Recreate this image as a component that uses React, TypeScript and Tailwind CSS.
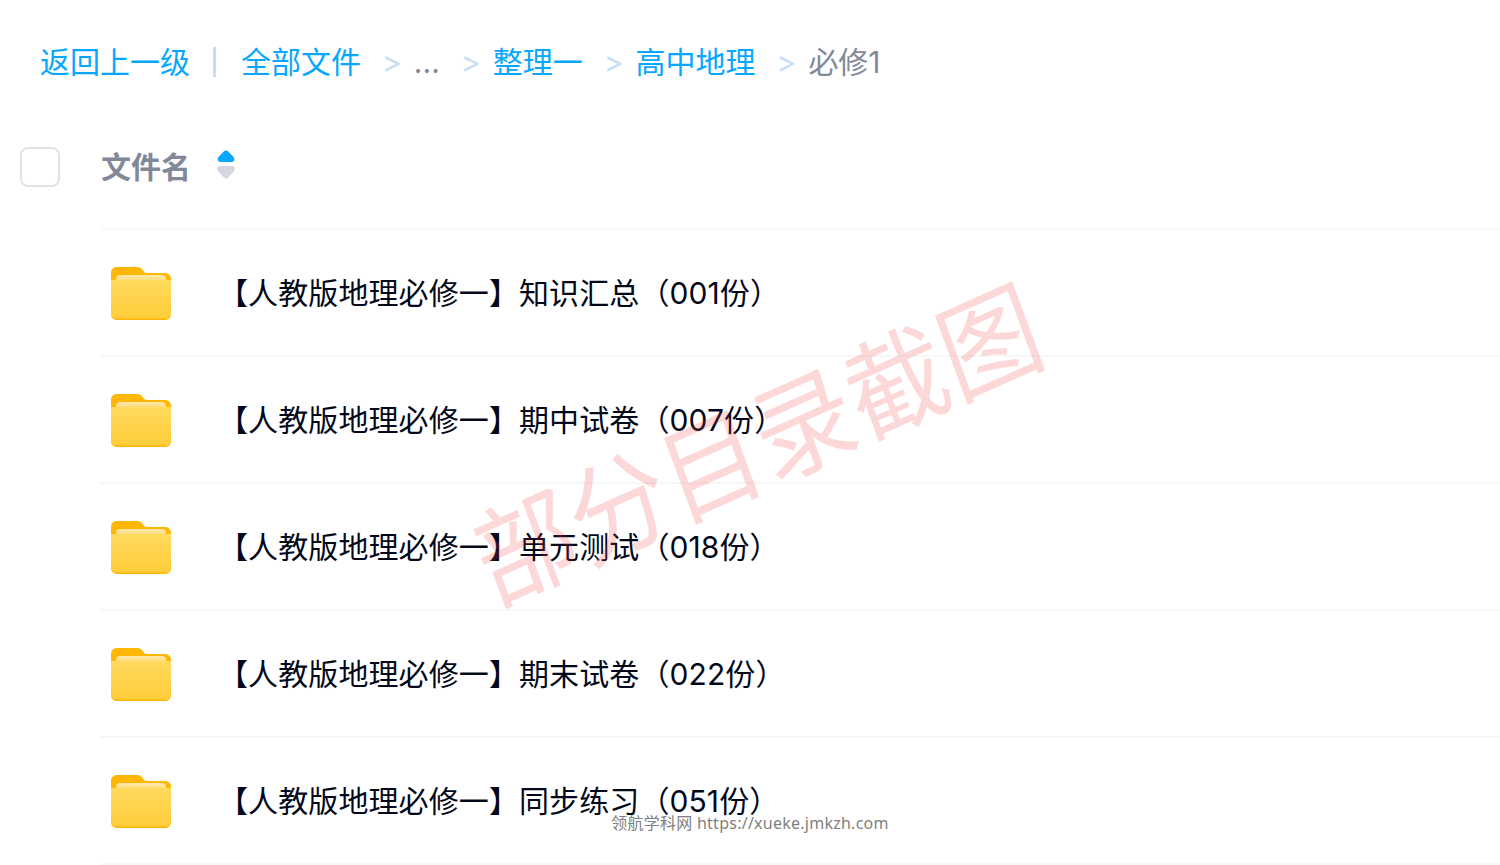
const ROWS = [
  "【人教版地理必修一】知识汇总（001份）",
  "【人教版地理必修一】期中试卷（007份）",
  "【人教版地理必修一】单元测试（018份）",
  "【人教版地理必修一】期末试卷（022份）",
  "【人教版地理必修一】同步练习（051份）",
];

function FolderIcon() {
  return (
    <svg width="60" height="53" viewBox="0 0 60 53" className="mt-[2px] shrink-0">
      <defs>
        <linearGradient id="folderFront" x1="0" y1="0" x2="0" y2="1">
          <stop offset="0" stopColor="#ffda5e" />
          <stop offset="1" stopColor="#ffcd3a" />
        </linearGradient>
        <linearGradient id="folderPaper" x1="0" y1="0" x2="0" y2="1">
          <stop offset="0" stopColor="#ffe7a6" />
          <stop offset="1" stopColor="#ffd65c" />
        </linearGradient>
      </defs>
      <path d="M6 0h20c3 0 4 1 6 3.500s3 2.500 6 2.500h16c3.500 0 6 2.500 6 6v10H0V6c0-3.500 2.500-6 6-6z" fill="#ffb703" />
      <rect x="5" y="8" width="50" height="10" rx="4" fill="url(#folderPaper)" />
      <path d="M0 13h60v34c0 3.500-2.500 6-6 6H6c-3.500 0-6-2.500-6-6z" fill="#ffb703" />
      <path d="M0 13h60v33c0 3.500-2.500 5.500-6 5.500H6c-3.500 0-6-2-6-5.500z" fill="url(#folderFront)" />
    </svg>
  );
}

function Sep() {
  return <span className="ml-[21px] mr-[12px] text-[#c6ddf7]">&gt;</span>;
}

export default function App() {
  return (
    <div className="relative h-[865px] w-[1500px] overflow-hidden bg-white font-['Inter','Noto_Sans_CJK_SC',sans-serif]">
      {/* 面包屑 */}
      <div className="flex h-[124px] items-center pl-[40px] text-[30px] leading-[40px] text-[#06a7ff]">
        <span>返回上一级</span>
        <span className="ml-[23px] mr-[25px] h-[30px] w-[3px] bg-[#c6ddf7]" />
        <span>全部文件</span>
        <Sep />
        <span className="text-[#818999]">...</span>
        <Sep />
        <span>整理一</span>
        <Sep />
        <span>高中地理</span>
        <Sep />
        <span className="text-[#818999]">必修1</span>
      </div>

      {/* 表头 */}
      <div className="flex h-[106px] items-start">
        <div className="ml-[20px] mt-[23px] h-[40px] w-[40px] rounded-[8px] border-2 border-[#dfe1e8]" />
        <div className="ml-[41px] flex h-full flex-1 items-start border-b-2 border-[#f7f7f7] pt-[23px]">
          <span className="text-[30px] font-bold leading-[40px] text-[#818999]">文件名</span>
          <svg width="18" height="30" viewBox="0 0 18 30" className="ml-[26px] mt-[3px]">
            <path d="M9 0.500c1 0 1.800 0.500 2.500 1.200l5 5.300c1.500 1.600 1 5-2 5H3.500c-3 0-3.500-3.400-2-5l5-5.300C7.200 1 8 0.500 9 0.500z" fill="#06a7ff" />
            <path d="M3 16h12c3 0 3.500 3.400 2 5l-5.500 6.200c-1.400 1.600-3.600 1.600-5 0L1 21c-1.500-1.600-1-5 2-5z" fill="#d4d7de" />
          </svg>
        </div>
      </div>

      {/* 文件列表 */}
      <div className="ml-[100px]">
        {ROWS.map((name) => (
          <div key={name} className="flex h-[127px] items-center border-b-2 border-[#f7f7f7] pl-[11px]">
            <FolderIcon />
            <span className="ml-[47px] whitespace-nowrap text-[30px] leading-[40px] tracking-[0.1px] text-[#03081a]">{name}</span>
          </div>
        ))}
      </div>

      {/* 水印 */}
      <div className="pointer-events-none absolute left-[458px] top-[386px] origin-center whitespace-nowrap text-[100px] leading-[120px] text-[#f03c3c]/20 [transform:scaleY(1.1)_rotate(-22deg)]">
        部分目录截图
      </div>
      <div className="pointer-events-none absolute left-0 top-[813px] w-full text-center font-['Noto_Sans','Noto_Sans_CJK_SC',sans-serif] text-[16px] leading-[20px] tracking-[0.25px] text-[#808080]">
        领航学科网 https://xueke.jmkzh.com
      </div>
    </div>
  );
}
